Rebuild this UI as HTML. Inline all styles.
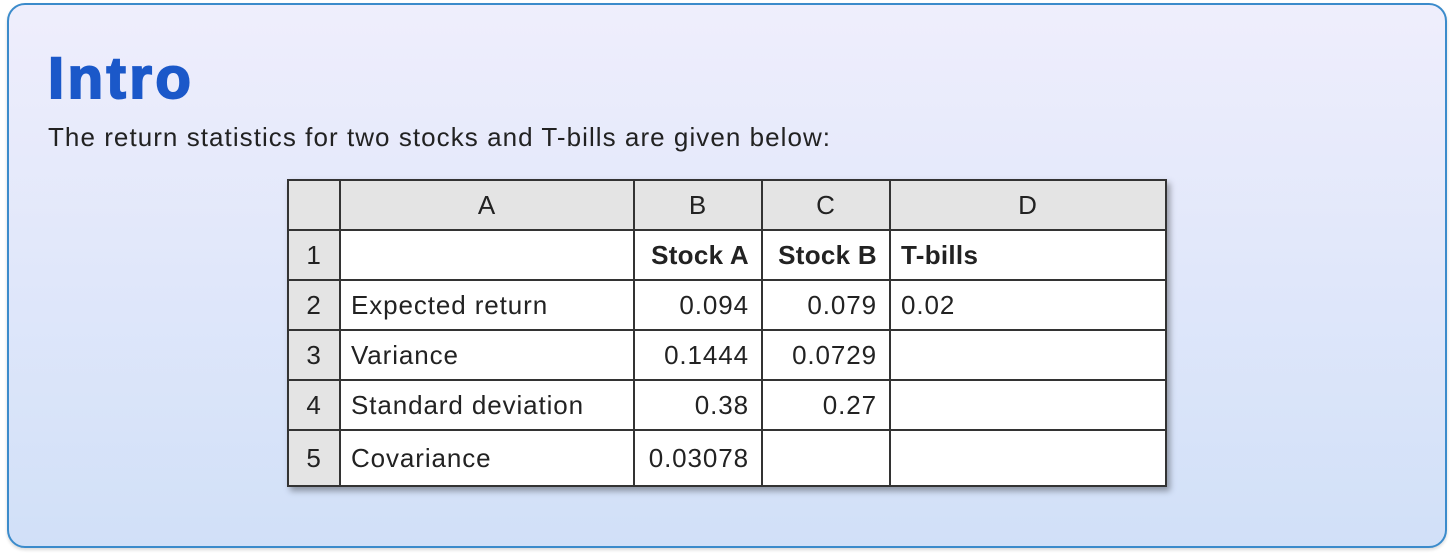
<!DOCTYPE html>
<html><head><style>
body{margin:0;width:1452px;height:556px;background:#fff;font-family:"Liberation Sans",Arial,sans-serif;position:relative;overflow:hidden}
.box{position:absolute;left:7px;top:3px;width:1436px;height:541px;border:2px solid #3b8bcb;border-radius:18px;background:linear-gradient(#efeefc,#d1e0f8);box-shadow:0 2px 3px rgba(0,0,0,.15)}
h1{position:absolute;left:48px;top:45px;margin:0;font-size:58px;font-weight:900;color:#1b58c9;letter-spacing:3.5px;-webkit-text-stroke:2px #1b58c9}
p{position:absolute;left:48px;top:122px;margin:0;font-size:26px;color:#222;letter-spacing:1.05px}
table{position:absolute;left:287px;top:179px;border-collapse:collapse;box-shadow:3px 4px 6px rgba(0,0,0,.35);background:#fff;table-layout:fixed;width:878px}
td{border:2px solid #333;height:50px;padding:0 10px;font-size:26px;color:#222;white-space:nowrap;box-sizing:border-box;overflow:hidden;letter-spacing:0.9px}
tr.h td{background:#e4e4e4;text-align:center}
td.n{background:#e4e4e4;text-align:center;padding:0}
td.r{text-align:right;padding-right:12px}
b{font-weight:bold;letter-spacing:0.3px}
</style></head><body>
<div class="box"></div>
<h1>Intro</h1>
<p>The return statistics for two stocks and T-bills are given below:</p>
<table>
<colgroup><col style="width:52px"><col style="width:294px"><col style="width:128px"><col style="width:128px"><col style="width:276px"></colgroup>
<tr class="h"><td></td><td>A</td><td>B</td><td>C</td><td>D</td></tr>
<tr><td class="n">1</td><td></td><td class="r"><b>Stock A</b></td><td class="r"><b>Stock B</b></td><td><b>T-bills</b></td></tr>
<tr><td class="n">2</td><td>Expected return</td><td class="r">0.094</td><td class="r">0.079</td><td>0.02</td></tr>
<tr><td class="n">3</td><td>Variance</td><td class="r">0.1444</td><td class="r">0.0729</td><td></td></tr>
<tr><td class="n">4</td><td>Standard deviation</td><td class="r">0.38</td><td class="r">0.27</td><td></td></tr>
<tr><td class="n">5</td><td style="height:56px">Covariance</td><td class="r">0.03078</td><td></td><td></td></tr>
</table>
</body></html>
